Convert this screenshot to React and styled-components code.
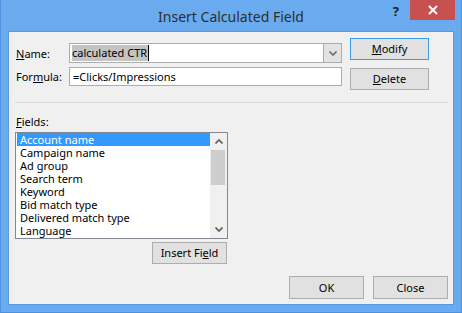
import React from "react";
import styled, { createGlobalStyle } from "styled-components";

const GlobalStyle = createGlobalStyle`
  html, body {
    margin: 0;
    padding: 0;
  }
  body {
    width: 462px;
    height: 313px;
    overflow: hidden;
    font-family: "Segoe UI", "Noto Sans", sans-serif;
    font-size: 11px;
    color: #000;
  }
`;

const Window = styled.div`
  width: 462px;
  height: 313px;
  box-sizing: border-box;
  background: #6aabf0;
  border: 1px solid #4f91e0;
  border-top: none;
  display: flex;
  flex-direction: column;
`;

const TitleBar = styled.div`
  height: 31px;
  display: grid;
  grid-template-columns: 1fr auto 1fr;
  align-items: center;
`;

const Title = styled.div`
  grid-column: 2;
  font-size: 14px;
  color: #2e2e2e;
  padding-top: 1px;
`;

const Controls = styled.div`
  justify-self: end;
  align-self: start;
  display: flex;
  align-items: flex-start;
`;

const Help = styled.span`
  font-size: 13px;
  font-weight: bold;
  color: #1e1e1e;
  margin-top: 2px;
  margin-right: 11px;
`;

const CloseBox = styled.div`
  width: 45px;
  height: 20px;
  margin-right: 6px;
  background: #c75050;
  display: flex;
  align-items: center;
  justify-content: center;
`;

const Panel = styled.div`
  flex: 1;
  margin: 0 7px 7px 7px;
  background: #f0f0f0;
  border: 1px solid #5a99e2;
  padding: 6px 5px 5px 6px;
  display: flex;
  flex-direction: column;
`;

const Top = styled.div`
  display: flex;
  gap: 8px;
`;

const Form = styled.div`
  margin-top: 5px;
  display: grid;
  grid-template-columns: 54px 273px;
  grid-template-rows: 20px 19px;
  row-gap: 4px;
  align-items: center;
`;

const Label = styled.label`
  padding-left: 1px;
`;

const Combo = styled.div`
  height: 20px;
  box-sizing: border-box;
  border: 1px solid #acacac;
  background: #fff;
  display: flex;
`;

const ComboText = styled.div`
  flex: 1;
  display: flex;
  align-items: center;
  padding-left: 2px;
`;

const Selected = styled.span`
  background: #c4c4c4;
  line-height: 16px;
  padding-right: 1px;
  border-right: 1px solid #000;
`;

const DropButton = styled.div`
  width: 17px;
  background: #e3e3e3;
  border-left: 1px solid #acacac;
  display: flex;
  align-items: center;
  justify-content: center;
`;

const TextBox = styled.div`
  height: 19px;
  box-sizing: border-box;
  border: 1px solid #acacac;
  background: #fff;
  padding-left: 3px;
  display: flex;
  align-items: center;
`;

const ButtonColumn = styled.div`
  display: flex;
  flex-direction: column;
  gap: 8px;
`;

const Button = styled.div`
  width: ${(p) => p.$w || 79}px;
  height: ${(p) => p.$h || 22}px;
  box-sizing: border-box;
  background: #e1e1e1;
  border: 1px solid ${(p) => (p.$default ? "#3e9be9" : "#adadad")};
  display: flex;
  align-items: center;
  justify-content: center;
  padding-bottom: 1px;
`;

const Separator = styled.div`
  height: 1px;
  background: #d9d9d9;
  margin-top: 12px;
`;

const FieldsLabel = styled.div`
  margin-top: 11px;
  padding-left: 1px;
  line-height: 15px;
`;

const FieldsBlock = styled.div`
  width: 213px;
  margin-top: 3px;
  display: flex;
  flex-direction: column;
  align-items: flex-end;
  gap: 3px;
`;

const ListBox = styled.div`
  width: 213px;
  height: 107px;
  box-sizing: border-box;
  border: 1px solid #828790;
  background: #fff;
  display: flex;
`;

const Items = styled.div`
  flex: 1;
  padding: 0 0 0 1px;
  overflow: hidden;
`;

const Item = styled.div`
  height: 13px;
  line-height: 13px;
  padding-left: 3px;
  white-space: nowrap;
  background: ${(p) => (p.$active ? "#3399ff" : "transparent")};
  color: ${(p) => (p.$active ? "#fff" : "#000")};
`;

const ScrollBar = styled.div`
  width: 17px;
  background: #f0f0f0;
  display: flex;
  flex-direction: column;
`;

const Arrow = styled.div`
  height: 17px;
  display: flex;
  align-items: center;
  justify-content: center;
`;

const Thumb = styled.div`
  height: 35px;
  margin: 0 2px 0 1px;
  background: #cdcdcd;
`;

const Track = styled.div`
  flex: 1;
`;

const Footer = styled.div`
  margin-top: auto;
  display: flex;
  justify-content: flex-end;
  gap: 9px;
`;

const Chevron = ({ up, color = "#606060" }) => (
  <svg width="8" height="5" viewBox="0 0 8 5">
    <path
      d={up ? "M0.5 4.5 L4 1 L7.5 4.5" : "M0.5 0.5 L4 4 L7.5 0.5"}
      fill="none"
      stroke={color}
      strokeWidth="1.7"
    />
  </svg>
);

const fields = [
  "Account name",
  "Campaign name",
  "Ad group",
  "Search term",
  "Keyword",
  "Bid match type",
  "Delivered match type",
  "Language",
];

export default function App() {
  return (
    <>
      <GlobalStyle />
      <Window>
        <TitleBar>
          <Title>Insert Calculated Field</Title>
          <Controls>
            <Help>?</Help>
            <CloseBox>
              <svg width="10" height="10" viewBox="0 0 10 10">
                <path d="M1 1 L9 9 M9 1 L1 9" stroke="#fff" strokeWidth="2" />
              </svg>
            </CloseBox>
          </Controls>
        </TitleBar>
        <Panel>
          <Top>
            <Form>
              <Label>
                <u>N</u>ame:
              </Label>
              <Combo>
                <ComboText>
                  <Selected>calculated CTR</Selected>
                </ComboText>
                <DropButton>
                  <Chevron color="#707070" />
                </DropButton>
              </Combo>
              <Label>
                For<u>m</u>ula:
              </Label>
              <TextBox>=Clicks/Impressions</TextBox>
            </Form>
            <ButtonColumn>
              <Button $default>
                <span>
                  <u>M</u>odify
                </span>
              </Button>
              <Button>
                <span>
                  <u>D</u>elete
                </span>
              </Button>
            </ButtonColumn>
          </Top>
          <Separator />
          <FieldsLabel>
            <u>F</u>ields:
          </FieldsLabel>
          <FieldsBlock>
            <ListBox>
              <Items>
                {fields.map((f, i) => (
                  <Item key={f} $active={i === 0}>
                    {f}
                  </Item>
                ))}
              </Items>
              <ScrollBar>
                <Arrow>
                  <Chevron up />
                </Arrow>
                <Thumb />
                <Track />
                <Arrow>
                  <Chevron />
                </Arrow>
              </ScrollBar>
            </ListBox>
            <Button $w={75} style={{ marginRight: 1 }}>
              <span>
                Insert Fi<u>e</u>ld
              </span>
            </Button>
          </FieldsBlock>
          <Footer>
            <Button $w={75} $h={23}>
              OK
            </Button>
            <Button $w={75} $h={23}>
              Close
            </Button>
          </Footer>
        </Panel>
      </Window>
    </>
  );
}
